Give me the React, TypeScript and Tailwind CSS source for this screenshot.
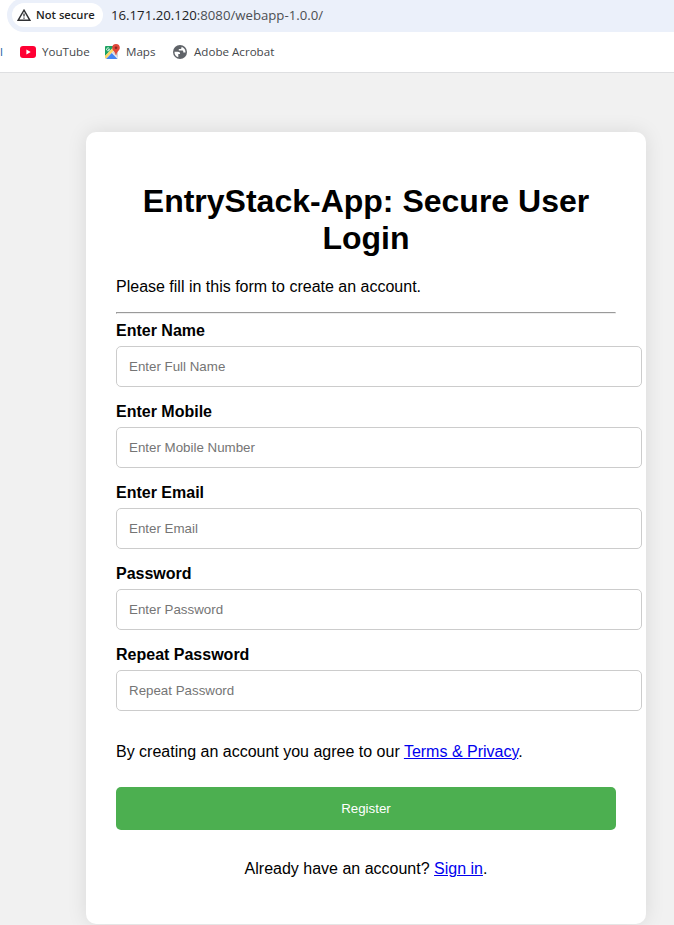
import React from "react";

const fields = [
  { label: "Enter Name", placeholder: "Enter Full Name", type: "text" },
  { label: "Enter Mobile", placeholder: "Enter Mobile Number", type: "text" },
  { label: "Enter Email", placeholder: "Enter Email", type: "text" },
  { label: "Password", placeholder: "Enter Password", type: "password" },
  { label: "Repeat Password", placeholder: "Repeat Password", type: "password" },
];

function WarningIcon() {
  return (
    <svg width="14" height="12" viewBox="0 0 14 12" className="shrink-0">
      <path d="M7 1.2 12.9 11.3H1.1Z" fill="none" stroke="#303134" strokeWidth="1.4" />
      <path d="M7 4.4v3.2M7 8.5v1.3" stroke="#303134" strokeWidth="1.3" />
    </svg>
  );
}

function YouTubeIcon() {
  return (
    <svg width="16" height="12" viewBox="0 0 16 12" className="shrink-0">
      <rect width="16" height="12" rx="3" fill="#ff0033" />
      <path d="M6.4 3.5 10.7 6 6.4 8.5Z" fill="#fff" />
    </svg>
  );
}

function MapsIcon() {
  return (
    <svg width="16" height="16" viewBox="0 0 16 16" className="shrink-0">
      <rect x="1" y="2" width="13" height="13" rx="1" fill="#e8eaed" />
      <path d="M1 3a1 1 0 0 1 1-1h8.5L1 12Z" fill="#1ea362" />
      <path d="M2 15 7.7 9.1 13.5 15Z" fill="#4285f4" />
      <path d="M1 12 10 2.8v3.4L2.2 14.6 1 14Z" fill="#fdd663" />
      <path d="M8.5 8.3 14 13.6V8l-2-1Z" fill="#d2d5d9" />
      <path d="M5.3 4.4a1.5 1.5 0 1 0 .3 1.1H4.2" fill="none" stroke="#fff" strokeWidth=".8" />
      <path d="M12 0a3.8 3.8 0 0 0-3.8 3.8C8.2 6.4 11 7.2 11.7 11h.6C13 7.2 15.8 6.4 15.8 3.8A3.8 3.8 0 0 0 12 0Z" fill="#e0483b" />
      <circle cx="12" cy="3.8" r="1.3" fill="#8c2820" />
    </svg>
  );
}

function GlobeIcon() {
  return (
    <svg width="14" height="14" viewBox="0 0 14 14" className="shrink-0">
      <circle cx="7" cy="7" r="7" fill="#5f6368" />
      <path d="M1.5 6.8H4.8c1.5 0 2.4.9 2.3 2.1H5.3v3.4A5.5 5.5 0 0 1 1.5 6.8Z" fill="#fff" />
      <path d="M8.5 1.7v1.1c0 .9-.6 1.2-1.5 1.2H5.8v1.6h3.3c.8 0 1.2.5 1.2 1.3v.7h2.2c.3-2.7-1.3-5.1-4-5.9Z" fill="#fff" />
    </svg>
  );
}

export default function App() {
  return (
    <div className="h-[925px] w-[674px] overflow-hidden bg-[#f1f1f1] font-['Liberation_Sans',Arial,sans-serif] text-base leading-[18px] text-black">
      <header className="h-[73px] overflow-hidden border-b border-[#dedfe1] bg-white font-['Open_Sans','Noto_Sans',sans-serif]">
        <div className="-mt-0.5 ml-[7px] flex h-[34px] items-center rounded-l-full bg-[#ebf0fa] pl-[5px]">
          <div className="flex h-6 w-[91px] items-center gap-[5px] rounded-full bg-white pl-[5px] text-[11.2px] font-semibold text-[#1f1f1f]">
            <WarningIcon />
            <span className="whitespace-nowrap">Not secure</span>
          </div>
          <div className="ml-2 whitespace-nowrap text-[13.2px] text-[#202124]">
            16.171.20.120<span className="text-[#4b4e52]">:8080/webapp-1.0.0/</span>
          </div>
        </div>
        <nav className="flex h-10 items-center whitespace-nowrap text-[11.6px] text-[#44474b]">
          <span className="w-5 text-[#1967a5]">l</span>
          <div className="flex w-[84px] items-center gap-[6px]">
            <YouTubeIcon />
            <span>YouTube</span>
          </div>
          <div className="flex w-[69px] items-center gap-[6px]">
            <MapsIcon />
            <span>Maps</span>
          </div>
          <div className="flex items-center gap-[7px]">
            <GlobeIcon />
            <span>Adobe Acrobat</span>
          </div>
        </nav>
      </header>
      <main className="ml-[86px] mt-[59px] h-[792px] w-[560px] rounded-[10px] bg-white px-[30px] pt-[51px] shadow-[0_0_20px_rgba(0,0,0,0.1)]">
        <h1 className="text-center text-[32px] font-bold leading-[37px]">EntryStack-App: Secure User Login</h1>
        <p className="mt-[21px]">Please fill in this form to create an account.</p>
        <hr className="mb-2 mt-4 h-0.5 border border-b-[#eeeeee] border-l-[#9a9a9a] border-r-[#eeeeee] border-t-[#9a9a9a]" />
        <form>
          {fields.map((field) => (
            <div key={field.label} className="mb-[16px]">
              <label className="block font-bold">{field.label}</label>
              <input
                type={field.type}
                placeholder={field.placeholder}
                className="mt-[6px] block h-[41px] w-[526px] rounded-[5px] border border-[#cccccc] bg-white px-3 text-[13.333px] leading-[15px] placeholder:text-[#757575]"
              />
            </div>
          ))}
          <p className="pt-4">
            By creating an account you agree to our{" "}
            <a href="#" className="text-[#0000ee] underline">Terms &amp; Privacy</a>.
          </p>
          <button type="button" className="mt-[26px] block h-[43px] w-full rounded-[5px] bg-[#4caf50] text-[13.333px] text-white">
            Register
          </button>
        </form>
        <p className="mt-[30px] text-center">
          Already have an account? <a href="#" className="text-[#0000ee] underline">Sign in</a>.
        </p>
      </main>
    </div>
  );
}
